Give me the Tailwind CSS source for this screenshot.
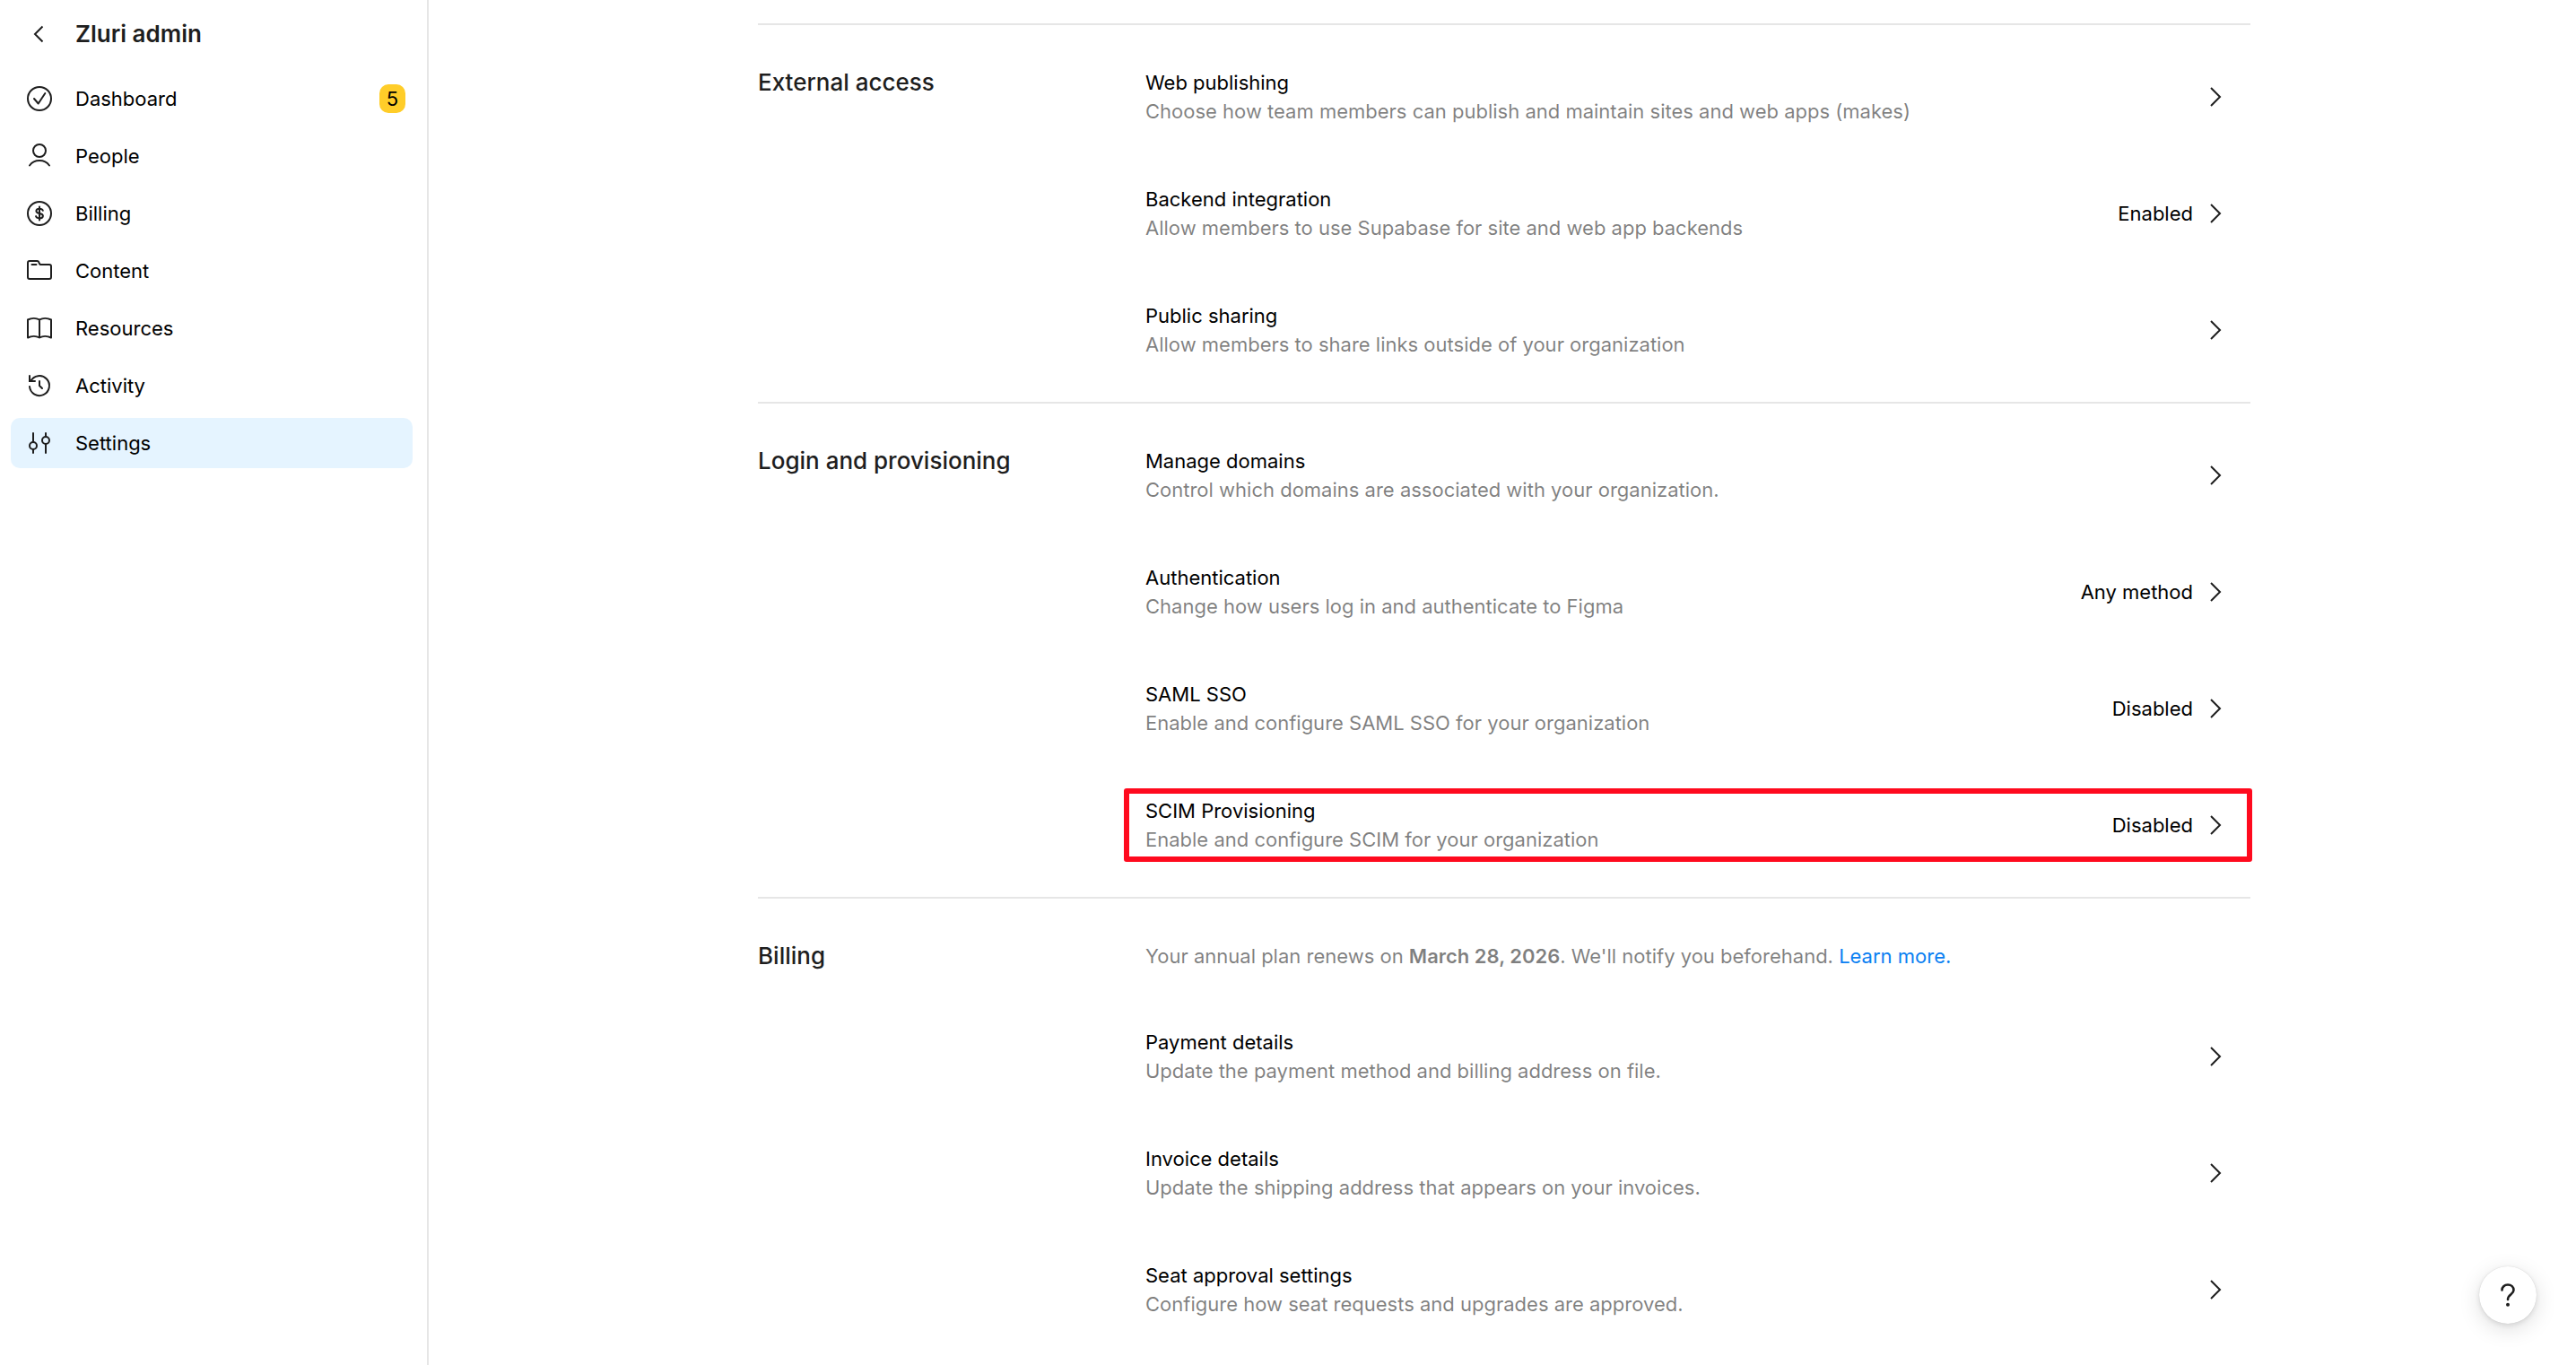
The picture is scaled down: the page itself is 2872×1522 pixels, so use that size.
<!DOCTYPE html>
<html lang="en">
<head>
    <meta charset="UTF-8">
    <meta name="viewport" content="width=device-width, initial-scale=1.0">
    <title>Zluri admin | Settings</title>
    <script src="https://cdn.jsdelivr.net/npm/@tailwindcss/browser@4"></script>
</head>
<body class="h-screen overflow-hidden bg-white font-['Inter',sans-serif] text-[22px] leading-8 text-black">
    <!-- Shared icons -->
    <svg class="hidden" aria-hidden="true">
        <symbol id="chevron" viewBox="0 0 24 24"><path d="M6 2L16 12L6 22" /></symbol>
    </svg>

    <div class="flex h-full">
        <!-- Sidebar -->
        <aside class="w-[478px] shrink-0 border-r-2 border-[#e6e6e6] pl-3 pr-4 pt-[10px]">
            <div class="flex h-14 items-center gap-6 px-4">
                <button type="button" aria-label="Back">
                    <svg class="size-8 fill-none stroke-[#1e1e1e] stroke-2" viewBox="0 0 32 32"><path d="M19.5 7.5L11 16L19.5 24.5" /></svg>
                </button>
                <h1 class="text-[26px] font-semibold text-[#1e1e1e]">Zluri admin</h1>
            </div>
            <nav class="mt-4 flex flex-col gap-2">
                <a href="#" class="flex h-14 items-center gap-6 rounded-[10px] pl-4 pr-2">
                    <svg class="size-8 fill-none stroke-[#1e1e1e] stroke-2" viewBox="0 0 32 32" stroke-linecap="round" stroke-linejoin="round"><circle cx="16" cy="16" r="13" /><path d="M10 16L14.7 21.5L22.3 10" /></svg>
                    Dashboard
                    <span class="ml-auto flex h-8 w-[29px] items-center justify-center rounded-[10px] bg-[#ffcd29]">5</span>
                </a>
                <a href="#" class="flex h-14 items-center gap-6 rounded-[10px] pl-4 pr-2">
                    <svg class="size-8 fill-none stroke-[#1e1e1e] stroke-2" viewBox="0 0 32 32" stroke-linecap="round"><circle cx="16" cy="10" r="7" /><path d="M5 26.5C7.5 23 11.5 21 16 21S24.5 23 27 26.5" /></svg>
                    People
                </a>
                <a href="#" class="flex h-14 items-center gap-6 rounded-[10px] pl-4 pr-2">
                    <svg class="size-8 fill-none stroke-[#1e1e1e] stroke-2" viewBox="0 0 32 32" stroke-linecap="round"><circle cx="16" cy="16" r="13" /><path d="M16 8.5V23.5M19.8 12.8C19.3 11.3 17.9 10.7 16 10.7C13.8 10.7 12.4 11.7 12.4 13.3C12.4 15 13.9 15.6 16 16C18.3 16.4 19.9 17 19.9 18.8C19.9 20.4 18.4 21.4 16 21.4C13.9 21.4 12.4 20.6 12 19.1" /></svg>
                    Billing
                </a>
                <a href="#" class="flex h-14 items-center gap-6 rounded-[10px] pl-4 pr-2">
                    <svg class="size-8 fill-none stroke-[#1e1e1e] stroke-2" viewBox="0 0 32 32" stroke-linecap="round" stroke-linejoin="round"><path d="M5 5H13.5C14.5 5 15 5.5 15.3 6.3L16 8C16.3 8.7 16.8 9 17.5 9H27C28.2 9 29 9.8 29 11V23C29 24.2 28.2 25 27 25H5C3.8 25 3 24.2 3 23V7C3 5.8 3.8 5 5 5ZM7.5 9H12.5" /></svg>
                    Content
                </a>
                <a href="#" class="flex h-14 items-center gap-6 rounded-[10px] pl-4 pr-2">
                    <svg class="size-8 fill-none stroke-[#1e1e1e] stroke-2" viewBox="0 0 32 32" stroke-linecap="round" stroke-linejoin="round"><path d="M16 6.5V26.5M16 6.5C12.5 4.4 7 4.4 3 6.5V26.5C7 24.4 12.5 24.4 16 26.5C19.5 24.4 25 24.4 29 26.5V6.5C25 4.4 19.5 4.4 16 6.5" /></svg>
                    Resources
                </a>
                <a href="#" class="flex h-14 items-center gap-6 rounded-[10px] pl-4 pr-2">
                    <svg class="size-8 fill-none stroke-[#1e1e1e] stroke-2" viewBox="0 0 32 32" stroke-linecap="round"><path d="M5 17A11 11 0 1 0 6.2 11M5 5V11H11M16 11V16L19 19" /></svg>
                    Activity
                </a>
                <a href="#" aria-current="page" class="flex h-14 items-center gap-6 rounded-[10px] bg-[#e5f4ff] pl-4 pr-2">
                    <svg class="size-8 fill-none stroke-[#1e1e1e] stroke-2" viewBox="0 0 32 32" stroke-linecap="round"><circle cx="9" cy="19" r="4" /><circle cx="23" cy="13" r="4" /><path d="M9 5V15M9 23V27M23 5V9M23 17V27" /></svg>
                    Settings
                </a>
            </nav>
        </aside>

        <!-- Settings -->
        <main class="min-w-0 flex-1 overflow-hidden pl-1 pt-[26px]">
            <div class="mx-auto max-w-[1664px]">
                <section class="flex border-t-2 border-[#e6e6e6] py-12">
                    <h2 class="w-[432px] shrink-0 text-[26px] font-medium text-[#1e1e1e]">External access</h2>
                    <div class="flex flex-1 flex-col gap-[66px]">
                        <a href="#" class="flex items-center gap-[14px] pr-[26px]">
                            <div class="flex-1">
                                <h3>Web publishing</h3>
                                <p class="text-black/50">Choose how team members can publish and maintain sites and web apps (makes)</p>
                            </div>
                            <svg class="size-6 fill-none stroke-[#1e1e1e] stroke-2"><use href="#chevron" /></svg>
                        </a>
                        <a href="#" class="flex items-center gap-[14px] pr-[26px]">
                            <div class="flex-1">
                                <h3>Backend integration</h3>
                                <p class="text-black/50">Allow members to use Supabase for site and web app backends</p>
                            </div>
                            <span>Enabled</span>
                            <svg class="size-6 fill-none stroke-[#1e1e1e] stroke-2"><use href="#chevron" /></svg>
                        </a>
                        <a href="#" class="flex items-center gap-[14px] pr-[26px]">
                            <div class="flex-1">
                                <h3>Public sharing</h3>
                                <p class="text-black/50">Allow members to share links outside of your organization</p>
                            </div>
                            <svg class="size-6 fill-none stroke-[#1e1e1e] stroke-2"><use href="#chevron" /></svg>
                        </a>
                    </div>
                </section>

                <section class="flex border-t-2 border-[#e6e6e6] py-12">
                    <h2 class="w-[432px] shrink-0 text-[26px] font-medium text-[#1e1e1e]">Login and provisioning</h2>
                    <div class="flex flex-1 flex-col gap-[66px]">
                        <a href="#" class="flex items-center gap-[14px] pr-[26px]">
                            <div class="flex-1">
                                <h3>Manage domains</h3>
                                <p class="text-black/50">Control which domains are associated with your organization.</p>
                            </div>
                            <svg class="size-6 fill-none stroke-[#1e1e1e] stroke-2"><use href="#chevron" /></svg>
                        </a>
                        <a href="#" class="flex items-center gap-[14px] pr-[26px]">
                            <div class="flex-1">
                                <h3>Authentication</h3>
                                <p class="text-black/50">Change how users log in and authenticate to Figma</p>
                            </div>
                            <span>Any method</span>
                            <svg class="size-6 fill-none stroke-[#1e1e1e] stroke-2"><use href="#chevron" /></svg>
                        </a>
                        <a href="#" class="flex items-center gap-[14px] pr-[26px]">
                            <div class="flex-1">
                                <h3>SAML SSO</h3>
                                <p class="text-black/50">Enable and configure SAML SSO for your organization</p>
                            </div>
                            <span>Disabled</span>
                            <svg class="size-6 fill-none stroke-[#1e1e1e] stroke-2"><use href="#chevron" /></svg>
                        </a>
                        <a href="#" class="relative flex items-center gap-[14px] pr-[26px]">
                            <div class="flex-1">
                                <h3>SCIM Provisioning</h3>
                                <p class="text-black/50">Enable and configure SCIM for your organization</p>
                            </div>
                            <span>Disabled</span>
                            <svg class="size-6 fill-none stroke-[#1e1e1e] stroke-2"><use href="#chevron" /></svg>
                            <!-- Highlight frame -->
                            <span class="absolute -inset-y-[9px] -left-6 -right-[2px] rounded-[3px] border-6 border-[#ff0a1e]"></span>
                        </a>
                    </div>
                </section>

                <section class="flex border-t-2 border-[#e6e6e6] py-12">
                    <h2 class="w-[432px] shrink-0 text-[26px] font-medium text-[#1e1e1e]">Billing</h2>
                    <div class="flex-1">
                        <p class="mb-16 text-black/50">Your annual plan renews on <strong class="font-semibold">March 28, 2026</strong>. We'll notify you beforehand. <a href="#" class="text-[#0a80f2]">Learn more.</a></p>
                        <div class="flex flex-col gap-[66px]">
                            <a href="#" class="flex items-center gap-[14px] pr-[26px]">
                                <div class="flex-1">
                                    <h3>Payment details</h3>
                                    <p class="text-black/50">Update the payment method and billing address on file.</p>
                                </div>
                                <svg class="size-6 fill-none stroke-[#1e1e1e] stroke-2"><use href="#chevron" /></svg>
                            </a>
                            <a href="#" class="flex items-center gap-[14px] pr-[26px]">
                                <div class="flex-1">
                                    <h3>Invoice details</h3>
                                    <p class="text-black/50">Update the shipping address that appears on your invoices.</p>
                                </div>
                                <svg class="size-6 fill-none stroke-[#1e1e1e] stroke-2"><use href="#chevron" /></svg>
                            </a>
                            <a href="#" class="flex items-center gap-[14px] pr-[26px]">
                                <div class="flex-1">
                                    <h3>Seat approval settings</h3>
                                    <p class="text-black/50">Configure how seat requests and upgrades are approved.</p>
                                </div>
                                <svg class="size-6 fill-none stroke-[#1e1e1e] stroke-2"><use href="#chevron" /></svg>
                            </a>
                        </div>
                    </div>
                </section>
            </div>
        </main>
    </div>

    <!-- Help button -->
    <button type="button" aria-label="Help" class="fixed bottom-[46px] right-11 flex size-16 items-center justify-center rounded-full bg-white shadow-[0_0_1px_rgba(0,0,0,0.2),0_2px_6px_rgba(0,0,0,0.1),0_6px_24px_rgba(0,0,0,0.13)]">
        <svg class="size-8 fill-none stroke-[#1e1e1e]" viewBox="0 0 32 32" stroke-width="2.6" stroke-linecap="round"><path d="M9.5 10.5C9.5 7 12.2 4.5 16 4.5S22.5 7 22.5 10.5C22.5 15.5 16 15 16 21" /><circle cx="16" cy="26.8" r="2" class="fill-[#1e1e1e] stroke-none" /></svg>
    </button>
</body>
</html>
